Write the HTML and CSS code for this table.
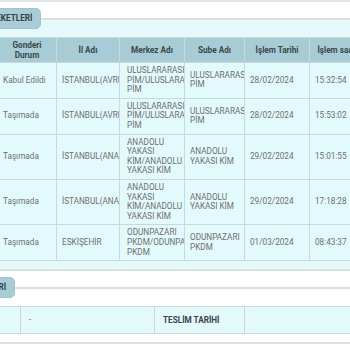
FILE: index.html
```html
<!DOCTYPE html>
<html lang="tr">
<head>
<meta charset="utf-8">
<link rel="stylesheet" href="styles.css">
</head>
<body>
<div class="prev-edge"></div>
<fieldset class="panel panel-tint">
  <legend class="badge badge-long">GÖNDERİ HAREKETLERİ</legend>
  <table class="grid">
    <colgroup>
      <col class="c1"><col class="c2"><col class="c3"><col class="c4"><col class="c5"><col class="c6">
    </colgroup>
    <thead>
      <tr>
        <th>Gonderi Durum</th>
        <th>İl Adı</th>
        <th>Merkez Adı</th>
        <th>Sube Adı</th>
        <th>İşlem Tarihi</th>
        <th>İşlem saati</th>
      </tr>
    </thead>
    <tbody>
      <tr>
        <td>Kabul Edildi</td>
        <td>İSTANBUL(AVRUPA)</td>
        <td class="wide-pad">ULUSLARARASI PİM/&#8288;ULUSLARARASI PİM</td>
        <td>ULUSLARARASI PİM</td>
        <td>28/02/2024</td>
        <td>15:32:54</td>
      </tr>
      <tr>
        <td>Taşımada</td>
        <td>İSTANBUL(AVRUPA)</td>
        <td class="wide-pad">ULUSLARARASI PİM/&#8288;ULUSLARARASI PİM</td>
        <td>ULUSLARARASI PİM</td>
        <td>28/02/2024</td>
        <td>15:53:02</td>
      </tr>
      <tr>
        <td>Taşımada</td>
        <td>İSTANBUL(ANADOLU)</td>
        <td class="wide-pad">ANADOLU YAKASI KİM/&#8288;ANADOLU YAKASI KİM</td>
        <td>ANADOLU YAKASI KİM</td>
        <td>29/02/2024</td>
        <td>15:01:55</td>
      </tr>
      <tr>
        <td>Taşımada</td>
        <td>İSTANBUL(ANADOLU)</td>
        <td class="wide-pad">ANADOLU YAKASI KİM/&#8288;ANADOLU YAKASI KİM</td>
        <td>ANADOLU YAKASI KİM</td>
        <td>29/02/2024</td>
        <td>17:18:28</td>
      </tr>
      <tr>
        <td>Taşımada</td>
        <td>ESKİŞEHİR</td>
        <td class="wide-pad">ODUNPAZARI PKDM/&#8288;ODUNPAZARI PKDM</td>
        <td>ODUNPAZARI PKDM</td>
        <td>01/03/2024</td>
        <td>08:43:37</td>
      </tr>
    </tbody>
  </table>
</fieldset>
<fieldset class="panel">
  <legend class="badge badge-short">TESLİM BİLGİLERİ</legend>
  <table class="grid info">
    <colgroup>
      <col class="i1"><col class="i2"><col class="i3"><col class="i4">
    </colgroup>
    <tbody>
      <tr>
        <td></td>
        <td>-</td>
        <th class="label">TESLİM TARİHİ</th>
        <td></td>
      </tr>
    </tbody>
  </table>
</fieldset>
</body>
</html>
```

FILE: styles.css
```css
html, body {
  margin: 0;
  padding: 0;
  background: #ffffff;
  overflow: hidden;
  width: 350px;
  height: 350px;
}

body {
  font-family: Roboto, "Noto Sans", "Liberation Sans", sans-serif;
  color: #6f6f6f;
}

.prev-edge {
  height: 0;
  border-bottom: 2px solid #e2e4e4;
}

.panel {
  margin: 6px 0 0 -3px;
  padding: 8px 0 8px 0;
  border: 2px solid #dcdfe0;
  border-left: none;
  width: 440px;
  min-width: 0;
}

.panel-tint {
  background: #e5f9fb;
}

.badge {
  background: #a9cdd6;
  border: 1px solid #9fc4cd;
  border-radius: 5px;
  padding: 5px 8px 5px 8px;
  font-size: 8.2px;
  line-height: 9px;
  font-weight: 700;
  color: #34454a;
  white-space: nowrap;
}

.badge-long {
  margin-left: -63px;
}

.badge-short {
  margin-left: -67px;
}

.grid {
  border-collapse: collapse;
  table-layout: fixed;
  width: 368px;
}

.grid th,
.grid td {
  border: 1px solid #c6dadd;
  overflow: hidden;
  vertical-align: middle;
  font-size: 8.2px;
}

.grid th {
  background: #a8ccd5;
  color: #38484c;
  font-weight: 700;
  text-align: center;
  line-height: 10px;
  padding: 2px 4px;
  height: 20px;
}

.grid td {
  background: #e3fafc;
  text-align: left;
  line-height: 9.6px;
  padding: 3px 5px;
}

.grid td.wide-pad {
  padding-left: 7px;
  padding-right: 2px;
}

.c1 { width: 59px; }
.c2 { width: 63px; }
.c3 { width: 65px; }
.c4 { width: 60px; }
.c5 { width: 65px; }
.c6 { width: 56px; }

.info {
  width: 420px;
}

.info td,
.info th {
  height: 20px;
}

.info .label {
  background: #e3fafc;
  text-align: left;
  color: #3a4447;
  padding: 3px 8px;
}

.info td {
  padding: 3px 8px;
}

.i1 { width: 23px; }
.i2 { width: 134px; }
.i3 { width: 90px; }
.i4 { width: 173px; }
```
